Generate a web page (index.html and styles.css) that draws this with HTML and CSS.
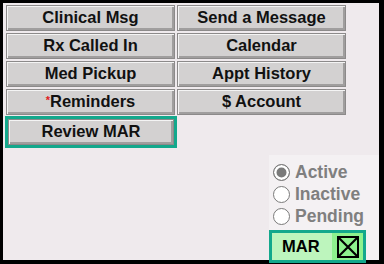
FILE: index.html
```html
<!DOCTYPE html>
<html>
<head>
<meta charset="utf-8">
<link rel="stylesheet" href="styles.css">
</head>
<body>
<div class="frame">
  <div class="grid">
    <div class="btn">Clinical Msg</div>
    <div class="btn">Send a Message</div>
    <div class="btn">Rx Called In</div>
    <div class="btn">Calendar</div>
    <div class="btn">Med Pickup</div>
    <div class="btn">Appt History</div>
    <div class="btn"><span class="req">*</span>Reminders</div>
    <div class="btn">$ Account</div>
    <div class="focus"><div class="btn inner">Review MAR</div></div>
  </div>
  <div class="panel">
    <div class="radio"><span class="dot checked"></span>Active</div>
    <div class="radio"><span class="dot"></span>Inactive</div>
    <div class="radio"><span class="dot"></span>Pending</div>
    <div class="mar">
      <span class="mar-label">MAR</span>
      <span class="mar-check">
        <svg width="22" height="22" viewBox="0 0 22 22"><rect x="1" y="1" width="20" height="20" fill="none" stroke="#000" stroke-width="2"/><path d="M2 2 L20 20 M20 2 L2 20" stroke="#000" stroke-width="2.2"/></svg>
      </span>
    </div>
  </div>
</div>
</body>
</html>
```
FILE: styles.css
```css
html, body {
  margin: 0;
  padding: 0;
  background: #000;
}
body {
  width: 384px;
  height: 264px;
  overflow: hidden;
  font-family: "Liberation Sans", Arial, sans-serif;
}
.frame {
  margin: 3px 0 0 3px;
  width: 376px;
  height: 257px;
  background: #efeaed;
  display: flex;
  flex-direction: column;
  box-sizing: border-box;
}
.grid {
  display: grid;
  grid-template-columns: 169px 169px;
  grid-auto-rows: 26px;
  gap: 2px;
  padding: 2px 0 0 3px;
}
.btn {
  box-sizing: border-box;
  background: #d3d1d1;
  border: 1px solid #8c8a8a;
  box-shadow: inset 1px 1px 0 #f4f4f4, inset -2px -2px 0 #a09e9e;
  font-weight: bold;
  font-size: 16.5px;
  color: #111;
  display: flex;
  align-items: center;
  justify-content: center;
  padding-bottom: 1px;
}
.req {
  color: #e02020;
  font-size: 11px;
  align-self: flex-start;
  margin-top: 4px;
}
.focus {
  margin: -1px 0 0 -1px;
  width: 172px;
  height: 32px;
  box-sizing: border-box;
  border: 3px solid #13a88c;
}
.inner {
  height: 100%;
}
.panel {
  margin-top: auto;
  margin-left: auto;
  width: 110px;
  height: 105px;
  background: #f4f1f3;
  box-sizing: border-box;
  padding-top: 6px;
  display: flex;
  flex-direction: column;
}
.radio {
  flex: none;
  height: 22px;
  display: flex;
  align-items: center;
  font-weight: bold;
  font-size: 17.5px;
  color: #7f7f7f;
  padding-left: 4px;
}
.dot {
  width: 17px;
  height: 17px;
  box-sizing: border-box;
  border: 1.5px solid #7a7a7a;
  border-radius: 50%;
  background: #fff;
  margin-right: 5px;
  flex: none;
}
.dot.checked {
  background: #7a7a7a;
  box-shadow: inset 0 0 0 2.5px #fff;
}
.mar {
  flex: none;
  margin-top: 3px;
  width: 97px;
  height: 33px;
  box-sizing: border-box;
  border: 3px solid #13a88c;
  background: #bdf5bd;
  display: flex;
  align-items: stretch;
}
.mar-label {
  flex: 1;
  font-weight: bold;
  font-size: 16.5px;
  color: #000;
  display: flex;
  align-items: center;
  padding-left: 10px;
}
.mar-check {
  width: 31px;
  background: #8ef28e;
  display: flex;
  align-items: center;
  justify-content: center;
}
```
